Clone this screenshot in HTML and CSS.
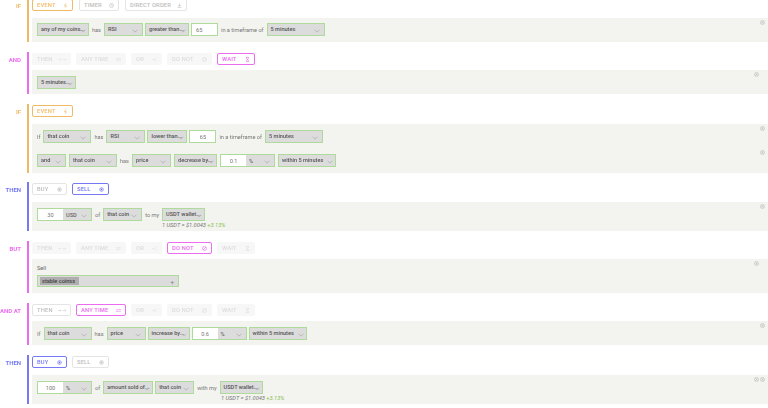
FILE: index.html
```html
<!DOCTYPE html>
<html lang="en">
<head>
<meta charset="utf-8">
<title>Strategy</title>
<link rel="stylesheet" href="styles.css">
</head>
<body>
<svg class="defs" width="0" height="0" aria-hidden="true">
  <symbol id="i-bolt" viewBox="0 0 8 8"><path d="M4.6 .5 2.4 4.4h3.2L3.4 7.5" fill="none" stroke="currentColor" stroke-width="1.1"/></symbol>
  <symbol id="i-clock" viewBox="0 0 8 8"><circle cx="4" cy="4" r="3.2" fill="none" stroke="currentColor"/><path d="M4 2v2.2h1.6" fill="none" stroke="currentColor" stroke-width=".8"/></symbol>
  <symbol id="i-down" viewBox="0 0 8 8"><path d="M4 1v4M2 3.4 4 5.4l2-2M1 7h6" fill="none" stroke="currentColor"/></symbol>
  <symbol id="i-arrows" viewBox="0 0 12 8"><path d="M0 4h4M2.8 2.8 4.2 4 2.8 5.2M7 4h5M10.4 2.800 12 4l-1.600 1.200" fill="none" stroke="currentColor" stroke-width=".8"/></symbol>
  <symbol id="i-swap" viewBox="0 0 10 8"><path d="M0 2.200h9M7.200 .8 9 2.200 7.200 3.600M10 5.800H1M2.800 4.400 1 5.800l1.800 1.400" fill="none" stroke="currentColor" stroke-width=".9"/></symbol>
  <symbol id="i-fork" viewBox="0 0 10 8"><path d="M0 4h4L7 1.500h2M4 4l3 2.500h2" fill="none" stroke="currentColor" stroke-width=".9"/></symbol>
  <symbol id="i-ban" viewBox="0 0 8 8"><circle cx="4" cy="4" r="3.200" fill="none" stroke="currentColor"/><path d="M1.800 6.200 6.200 1.800" stroke="currentColor"/></symbol>
  <symbol id="i-glass" viewBox="0 0 8 8"><path d="M1.800 .7h4.400M1.800 7.300h4.400M2.400 .7v1.500L5.600 5.800v1.500M5.600 .7v1.500L2.400 5.800v1.500" fill="none" stroke="currentColor"/></symbol>
  <symbol id="i-target" viewBox="0 0 8 8"><circle cx="4" cy="4" r="3" fill="none" stroke="currentColor"/><circle cx="4" cy="4" r="1.500" fill="currentColor"/></symbol>
  <symbol id="i-close" viewBox="0 0 8 8"><circle cx="4" cy="4" r="3.300" fill="#e6e6e3" stroke="currentColor" stroke-width=".8"/><path d="M2.600 2.600l2.800 2.800M5.400 2.600 2.600 5.400" stroke="currentColor" stroke-width=".8"/></symbol>
  <symbol id="i-caret" viewBox="0 0 8 5"><path d="M.8 .8 4 4 7.200 .8" fill="none" stroke="currentColor" stroke-width=".7"/></symbol>
</svg>

<main class="page">
  <section class="block block-first orange">
    <h2 class="label">IF</h2>
    <div class="body">
      <nav class="tabs gap-wide">
        <span class="tab w41 on"><b>EVENT</b><svg class="ic"><use href="#i-bolt"/></svg></span>
        <span class="tab w40 off"><b>TIMER</b><svg class="ic"><use href="#i-clock"/></svg></span>
        <span class="tab w62 off"><b>DIRECT ORDER</b><svg class="ic"><use href="#i-down"/></svg></span>
      </nav>
      <div class="panel panel-top">
        <svg class="close"><use href="#i-close"/></svg>
        <div class="row">
          <span class="chip t w52">any of my coins...<svg class="caret"><use href="#i-caret"/></svg></span>
          <span class="word">has</span>
          <span class="chip w39">RSI<svg class="caret"><use href="#i-caret"/></svg></span>
          <span class="chip t w44">greater than...<svg class="caret"><use href="#i-caret"/></svg></span>
          <span class="num w27 left">65</span>
          <span class="word">in a timeframe of</span>
          <span class="chip w58">5 minutes<svg class="caret"><use href="#i-caret"/></svg></span>
        </div>
      </div>
    </div>
  </section>

  <section class="block magenta">
    <h2 class="label">AND</h2>
    <div class="body">
      <nav class="tabs">
        <span class="tab w39 dim"><b>THEN</b><svg class="ic ic-w"><use href="#i-arrows"/></svg></span>
        <span class="tab w50 dim"><b>ANY TIME</b><svg class="ic"><use href="#i-swap"/></svg></span>
        <span class="tab w31 dim"><b>OR</b><svg class="ic"><use href="#i-fork"/></svg></span>
        <span class="tab w45 dim"><b>DO NOT</b><svg class="ic"><use href="#i-ban"/></svg></span>
        <span class="tab w38 on"><b>WAIT</b><svg class="ic"><use href="#i-glass"/></svg></span>
      </nav>
      <div class="panel panel-near">
        <svg class="close close-in"><use href="#i-close"/></svg>
        <div class="row">
          <span class="chip t w39">5 minutes...<svg class="caret"><use href="#i-caret"/></svg></span>
        </div>
      </div>
    </div>
  </section>

  <section class="block orange">
    <h2 class="label">IF</h2>
    <div class="body">
      <nav class="tabs">
        <span class="tab w41 on"><b>EVENT</b><svg class="ic"><use href="#i-bolt"/></svg></span>
      </nav>
      <div class="panel panel-two">
        <div class="row">
          <svg class="close"><use href="#i-close"/></svg>
          <span class="word first">If</span>
          <span class="chip w48">that coin<svg class="caret"><use href="#i-caret"/></svg></span>
          <span class="word">has</span>
          <span class="chip w39">RSI<svg class="caret"><use href="#i-caret"/></svg></span>
          <span class="chip t w40">lower than...<svg class="caret"><use href="#i-caret"/></svg></span>
          <span class="num w27">65</span>
          <span class="word">in a timeframe of</span>
          <span class="chip w58">5 minutes<svg class="caret"><use href="#i-caret"/></svg></span>
        </div>
        <div class="row row-wide">
          <svg class="close"><use href="#i-close"/></svg>
          <span class="chip w29">and<svg class="caret"><use href="#i-caret"/></svg></span>
          <span class="chip w48">that coin<svg class="caret"><use href="#i-caret"/></svg></span>
          <span class="word">has</span>
          <span class="chip w39">price<svg class="caret"><use href="#i-caret"/></svg></span>
          <span class="chip t w43">decrease by...<svg class="caret"><use href="#i-caret"/></svg></span>
          <span class="group"><span class="num-in">0.1</span><span class="unit">%<svg class="caret"><use href="#i-caret"/></svg></span></span>
          <span class="chip t w58">within 5 minutes<svg class="caret"><use href="#i-caret"/></svg></span>
        </div>
      </div>
    </div>
  </section>

  <section class="block block-pull blue">
    <h2 class="label">THEN</h2>
    <div class="body">
      <nav class="tabs">
        <span class="tab w35 off"><b>BUY</b><svg class="ic"><use href="#i-target"/></svg></span>
        <span class="tab w37 on"><b>SELL</b><svg class="ic"><use href="#i-target"/></svg></span>
      </nav>
      <div class="panel panel-sub">
        <svg class="close"><use href="#i-close"/></svg>
        <div class="row">
          <span class="group"><span class="num-in">30</span><span class="unit">USD<svg class="caret"><use href="#i-caret"/></svg></span></span>
          <span class="word">of</span>
          <span class="chip w39">that coin<svg class="caret"><use href="#i-caret"/></svg></span>
          <span class="word">to my</span>
          <span class="chip t w43">USDT wallet...<svg class="caret"><use href="#i-caret"/></svg></span>
        </div>
        <p class="rate rate-a">1 USDT = $1.0043 <span class="up">+3.13%</span></p>
      </div>
    </div>
  </section>

  <section class="block magenta">
    <h2 class="label">BUT</h2>
    <div class="body">
      <nav class="tabs">
        <span class="tab w39 dim"><b>THEN</b><svg class="ic ic-w"><use href="#i-arrows"/></svg></span>
        <span class="tab w50 dim"><b>ANY TIME</b><svg class="ic"><use href="#i-swap"/></svg></span>
        <span class="tab w31 dim"><b>OR</b><svg class="ic"><use href="#i-fork"/></svg></span>
        <span class="tab w45 on"><b>DO NOT</b><svg class="ic"><use href="#i-ban"/></svg></span>
        <span class="tab w38 dim"><b>WAIT</b><svg class="ic"><use href="#i-glass"/></svg></span>
      </nav>
      <div class="panel panel-near panel-sell">
        <svg class="close close-in"><use href="#i-close"/></svg>
        <p class="field-label">Sell</p>
        <div class="multi"><span class="tag">stable coins<i class="x">x</i></span><span class="plus">+</span></div>
      </div>
    </div>
  </section>

  <section class="block magenta">
    <h2 class="label">AND AT</h2>
    <div class="body">
      <nav class="tabs">
        <span class="tab w39 off"><b>THEN</b><svg class="ic ic-w"><use href="#i-arrows"/></svg></span>
        <span class="tab w50 on"><b>ANY TIME</b><svg class="ic"><use href="#i-swap"/></svg></span>
        <span class="tab w31 dim"><b>OR</b><svg class="ic"><use href="#i-fork"/></svg></span>
        <span class="tab w45 dim"><b>DO NOT</b><svg class="ic"><use href="#i-ban"/></svg></span>
        <span class="tab w38 dim"><b>WAIT</b><svg class="ic"><use href="#i-glass"/></svg></span>
      </nav>
      <div class="panel panel-near">
        <svg class="close"><use href="#i-close"/></svg>
        <div class="row">
          <span class="word first">If</span>
          <span class="chip w48">that coin<svg class="caret"><use href="#i-caret"/></svg></span>
          <span class="word">has</span>
          <span class="chip w39">price<svg class="caret"><use href="#i-caret"/></svg></span>
          <span class="chip t w42">increase by...<svg class="caret"><use href="#i-caret"/></svg></span>
          <span class="group"><span class="num-in">0.6</span><span class="unit">%<svg class="caret"><use href="#i-caret"/></svg></span></span>
          <span class="chip t w58">within 5 minutes<svg class="caret"><use href="#i-caret"/></svg></span>
        </div>
      </div>
    </div>
  </section>

  <section class="block blue">
    <h2 class="label">THEN</h2>
    <div class="body">
      <nav class="tabs">
        <span class="tab w35 on"><b>BUY</b><svg class="ic"><use href="#i-target"/></svg></span>
        <span class="tab w37 off"><b>SELL</b><svg class="ic"><use href="#i-target"/></svg></span>
      </nav>
      <div class="panel panel-sub">
        <svg class="close close-in"><use href="#i-close"/></svg>
        <svg class="close"><use href="#i-close"/></svg>
        <div class="row">
          <span class="group"><span class="num-in">100</span><span class="unit">%<svg class="caret"><use href="#i-caret"/></svg></span></span>
          <span class="word">of</span>
          <span class="chip t w50">amount sold of...<svg class="caret"><use href="#i-caret"/></svg></span>
          <span class="chip w39">that coin<svg class="caret"><use href="#i-caret"/></svg></span>
          <span class="word">with my</span>
          <span class="chip t w43">USDT wallet...<svg class="caret"><use href="#i-caret"/></svg></span>
        </div>
        <p class="rate rate-b">1 USDT = $1.0043 <span class="up">+3.13%</span></p>
      </div>
    </div>
  </section>
</main>
</body>
</html>
```
FILE: styles.css
```css
* { box-sizing: border-box; }
html, body { margin: 0; padding: 0; height: 408px; overflow: hidden; background: #fff; }
body { font-family: Roboto, "Liberation Sans", sans-serif; font-size: 6px; color: #555; }
.defs { display: block; height: 0; }
.page { display: flex; flex-direction: column; gap: 10px; filter: blur(.5px); }

.block { display: flex; --c: #999; }
.block-first { margin-top: -2px; }
.block-pull { margin-top: -1px; }
.orange { --c: #f0b964; }
.magenta { --c: #ec6cf0; }
.blue { --c: #7579f5; }
.label { flex: 0 0 27px; margin: 0; padding: 4px 6px 0 0; text-align: right; font-size: 6px; line-height: 8px; font-weight: 700; color: var(--c); white-space: nowrap; }
.body { flex: 1; min-width: 0; border-left: 2px solid var(--c); padding-left: 3px; }

.tabs { display: flex; gap: 5px; height: 12px; margin-top: 1px; }
.gap-wide { gap: 6px; }
.tab { display: flex; align-items: center; justify-content: space-between; height: 12px; padding: 0 4px; border: 1px solid transparent; border-radius: 2px; font-size: 5.800px; letter-spacing: .15px; }
.tab b { font-weight: 500; }
.tab.on { border-color: var(--c); color: var(--c); background: #fff; }
.tab.off { border-color: #e4e4e4; color: #bdbdbd; background: #fff; }
.tab.dim { background: #f7f7f7; color: #dcdcdc; }
.ic { width: 5px; height: 5px; flex: none; }
.ic-w { width: 8px; }

.panel { position: relative; margin-top: 7px; background: #f3f3ef; padding: 6px 5px; }
.panel-top { padding-top: 5px; }
.panel-near { margin-top: 5px; padding-bottom: 5px; }
.panel-two { display: flex; flex-direction: column; gap: 11px; }
.panel-two .row { position: relative; }
.panel-two .close { right: -2px; top: -4.500px; }
.panel-sub { padding-bottom: 2px; }
.panel-sell { padding-bottom: 6px; }

.close { position: absolute; right: 3px; top: 1.500px; width: 5px; height: 5px; color: #b8b8b8; }
.close-in { right: 9.500px; }

.row { display: flex; align-items: center; height: 13px; gap: 2px; }
.row-wide { gap: 3px; }
.row-wide .word { padding: 0; }
.chip { position: relative; display: flex; align-items: center; height: 13px; padding: 0 3px 1px 3px; background: #dcdcdc; border: 1px solid #aedb9c; font-size: 5.600px; font-weight: 500; color: #555; white-space: nowrap; overflow: hidden; }
.caret { position: absolute; right: 4px; top: 5px; width: 6px; height: 4px; color: #999; }
.chip.t .caret { right: 2px; }
.word { padding: 0 1px; font-size: 5.600px; color: #777; white-space: nowrap; }
.word.first { padding: 0 1px 0 0; }
.num { display: flex; align-items: center; justify-content: center; height: 13px; background: #fff; border: 1px solid #aedb9c; font-size: 5.600px; color: #777; }
.num.left { justify-content: flex-start; padding-left: 4px; }
.group { display: flex; width: 55px; height: 13px; border: 1px solid #aedb9c; background: #dcdcdc; }
.num-in { display: flex; align-items: center; justify-content: center; width: 25px; background: #fff; font-size: 5.600px; color: #777; }
.unit { position: relative; flex: 1; display: flex; align-items: center; padding-left: 3px; font-size: 5.600px; font-weight: 500; color: #666; }

.rate { margin: 0; font-size: 5.700px; line-height: 8px; font-style: italic; color: #777; }
.rate-a { padding-left: 125px; }
.rate-b { padding-left: 184px; }
.up { color: #8cc152; }

.field-label { margin: 0 0 3px; font-size: 5.600px; line-height: 7px; color: #666; }
.multi { display: flex; align-items: center; justify-content: space-between; width: 142px; height: 12px; padding: 0 4px 0 2px; background: #dcdcdc; border: 1px solid #aedb9c; }
.tag { display: flex; align-items: center; width: 39px; height: 8px; padding-left: 2px; background: #aeaeae; font-size: 5.600px; font-weight: 500; color: #444; white-space: nowrap; }
.x { font-style: normal; }
.plus { font-size: 6px; color: #777; }

.w27 { width: 27px; } .w29 { width: 29px; } .w31 { width: 31px; } .w35 { width: 35px; }
.w37 { width: 37px; } .w38 { width: 38px; } .w39 { width: 39px; } .w40 { width: 40px; }
.w41 { width: 41px; } .w42 { width: 42px; } .w43 { width: 43px; } .w44 { width: 44px; } .w45 { width: 45px; }
.w48 { width: 48px; } .w50 { width: 50px; } .w52 { width: 52px; } .w58 { width: 58px; } .w62 { width: 62px; }
```
